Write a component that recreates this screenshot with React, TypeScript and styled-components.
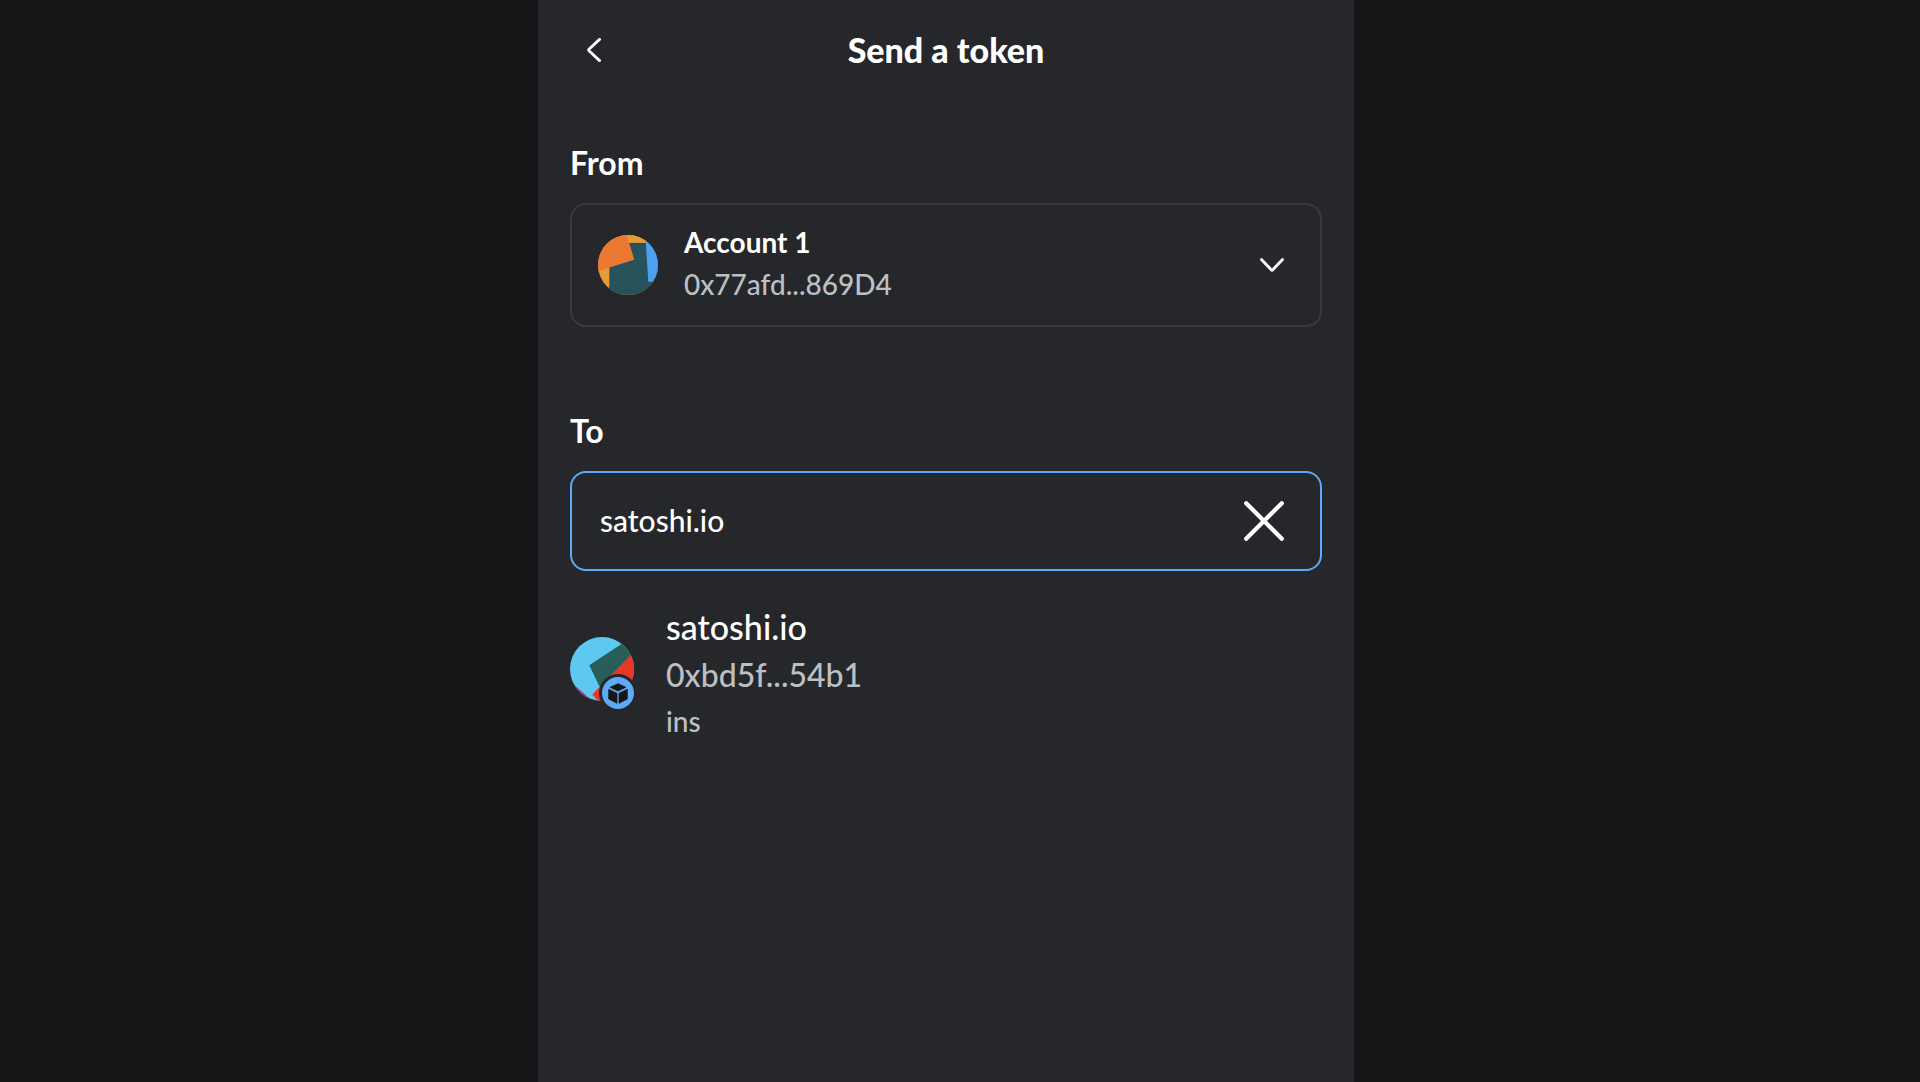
import React, { useState } from "react";
import styled, { createGlobalStyle } from "styled-components";

const colors = {
  backdrop: "#141618",
  surface: "#26272b",
  border: "#393b3f",
  primary: "#5fa9f7",
  text: "#ffffff",
  muted: "#bbc0c5",
};

const GlobalStyle = createGlobalStyle`
  *, *::before, *::after { box-sizing: border-box; }
  body {
    margin: 0;
    background: ${colors.backdrop};
    color: ${colors.text};
    font-family: "Lato Medium", Lato, "Liberation Sans", sans-serif;
  }
  button, input { font: inherit; color: inherit; }
`;

const Page = styled.div`
  display: flex;
  justify-content: center;
  min-height: 100vh;
  padding-right: 28px;
`;

const Panel = styled.main`
  display: flex;
  flex-direction: column;
  width: 100%;
  max-width: 816px;
  padding: 0 32px 32px;
  background: ${colors.surface};
`;

const Header = styled.header`
  display: grid;
  grid-template-columns: 48px 1fr 48px;
  align-items: center;
  height: 99px;
`;

const Title = styled.h1`
  margin: 0;
  font-family: "Lato Black", Lato, "Liberation Sans", sans-serif;
  font-size: 34px;
  line-height: 48px;
  font-weight: 900;
  text-align: center;
`;

const IconButton = styled.button<{ $size: number }>`
  display: flex;
  align-items: center;
  justify-content: center;
  flex: none;
  width: ${(p) => p.$size}px;
  height: ${(p) => p.$size}px;
  padding: 0;
  border: 0;
  background: none;
  cursor: pointer;
`;

const Section = styled.section`
  display: flex;
  flex-direction: column;
  gap: 16px;
  padding-top: 40px;
  margin-bottom: 40px;
`;

const labelText = `
  margin: 0;
  font-family: Lato, "Liberation Sans", sans-serif;
  font-size: 32px;
  line-height: 48px;
  font-weight: 700;
`;

const SectionTitle = styled.h2`
  ${labelText}
`;

const SectionLabel = styled.label`
  ${labelText}
`;

const AccountButton = styled.button`
  display: flex;
  align-items: center;
  gap: 26px;
  height: 124px;
  padding: 0 36px 0 26px;
  border: 2px solid ${colors.border};
  border-radius: 16px;
  background: none;
  text-align: left;
  cursor: pointer;
`;

const Lines = styled.span<{ $lift?: number }>`
  display: flex;
  flex: 1;
  flex-direction: column;
  min-width: 0;
  padding-bottom: ${(p) => p.$lift ?? 0}px;
`;

const Line = styled.span<{ $size: number; $height: number; $muted?: boolean; $bold?: boolean }>`
  font-family: ${(p) => (p.$bold ? 'Lato, "Liberation Sans", sans-serif' : "inherit")};
  font-size: ${(p) => p.$size}px;
  line-height: ${(p) => p.$height}px;
  font-weight: ${(p) => (p.$bold ? 700 : 400)};
  color: ${(p) => (p.$muted ? colors.muted : colors.text)};
`;

const Field = styled.div`
  display: flex;
  align-items: center;
  height: 100px;
  padding: 0 32px 0 28px;
  border: 2px solid ${colors.primary};
  border-radius: 16px;
`;

const Input = styled.input`
  flex: 1;
  min-width: 0;
  padding: 0 0 2px;
  border: 0;
  outline: 0;
  background: none;
  font-size: 30px;
  line-height: 40px;
`;

const Result = styled.button`
  display: flex;
  align-items: center;
  gap: 32px;
  padding: 16px 0;
  border: 0;
  background: none;
  text-align: left;
  cursor: pointer;
`;

const AvatarWrap = styled.span`
  position: relative;
  display: flex;
  flex: none;
  margin-bottom: 8px;
`;

const Badge = styled.span`
  position: absolute;
  right: -3px;
  bottom: -11px;
  display: flex;
  border: 3px solid ${colors.surface};
  border-radius: 50%;
  background: ${colors.surface};
`;

const AccountAvatar = () => (
  <svg width="60" height="60" viewBox="0 0 60 60" aria-hidden="true">
    <clipPath id="account-circle"><circle cx="30" cy="30" r="30" /></clipPath>
    <g clipPath="url(#account-circle)">
      <rect width="60" height="60" fill="#e49b38" />
      <path d="M11.3 7.7H60V60H11.3z" fill="#25525b" />
      <path d="M47.3 0H60V46.7H50.3z" fill="#4ba1ee" />
      <path d="M28 0H47.7V7.7H28z" fill="#e49b38" />
      <path d="M0 0H28.8L36.3 24.7L0 36z" fill="#ec7932" />
    </g>
  </svg>
);

const RecipientAvatar = () => (
  <svg width="64" height="64" viewBox="0 0 64 64" aria-hidden="true">
    <clipPath id="recipient-circle"><circle cx="32" cy="32" r="32" /></clipPath>
    <g clipPath="url(#recipient-circle)">
      <rect width="64" height="64" fill="#5dc8f0" />
      <path d="M62 16L22.3 57.5L30 66H64V16z" fill="#e53826" />
      <path d="M19.3 28.3L52.3 6.5L64 14.5L43 36.3L29.6 49.8z" fill="#295d58" />
      <path d="M2 46L20 62V64H0z" fill="#c01c7c" />
    </g>
  </svg>
);

const CubeBadge = () => (
  <svg width="32" height="32" viewBox="0 0 96 96" aria-hidden="true">
    <circle cx="48" cy="48" r="48" fill="#5fa9f7" />
    <g fill="#141618" stroke="#141618" strokeWidth="2" strokeLinejoin="round">
      <path d="M48 20L72 31L48 42L24 31z" />
      <path d="M20 37L45 49V79L20 66z" />
      <path d="M76 37L51 49V79L76 66z" />
    </g>
  </svg>
);

const Stroke = styled.svg`
  fill: none;
  stroke: ${colors.text};
  stroke-linecap: round;
  stroke-linejoin: round;
  flex: none;
`;

export default function App() {
  const [recipient, setRecipient] = useState("satoshi.io");

  return (
    <>
      <GlobalStyle />
      <Page>
        <Panel>
          <Header>
            <IconButton $size={48} type="button" aria-label="Back">
              <Stroke width="14" height="24" viewBox="0 0 14 24" strokeWidth="2.8">
                <path d="M12.6 1.4L2.2 11Q1.2 12 2.2 13L12.6 22.6" />
              </Stroke>
            </IconButton>
            <Title>Send a token</Title>
          </Header>

          <Section>
            <SectionTitle>From</SectionTitle>
            <AccountButton type="button">
              <AccountAvatar />
              <Lines $lift={4}>
                <Line $size={28} $height={42} $bold>Account 1</Line>
                <Line $size={28} $height={42} $muted>0x77afd...869D4</Line>
              </Lines>
              <Stroke width="24" height="14" viewBox="0 0 24 14" strokeWidth="2.8">
                <path d="M1.5 1.5L11.2 11.8Q12 12.6 12.8 11.8L22.5 1.5" />
              </Stroke>
            </AccountButton>
          </Section>

          <Section>
            <SectionLabel htmlFor="recipient">To</SectionLabel>
            <Field>
              <Input
                id="recipient"
                type="text"
                spellCheck={false}
                value={recipient}
                onChange={(e) => setRecipient(e.target.value)}
              />
              <IconButton $size={48} type="button" aria-label="Clear" onClick={() => setRecipient("")}>
                <Stroke width="40" height="40" viewBox="0 0 40 40" strokeWidth="4.2">
                  <path d="M2.2 2.2L37.8 37.8M37.8 2.2L2.2 37.8" />
                </Stroke>
              </IconButton>
            </Field>
            <Result type="button">
              <AvatarWrap>
                <RecipientAvatar />
                <Badge>
                  <CubeBadge />
                </Badge>
              </AvatarWrap>
              <Lines>
                <Line $size={34} $height={48}>satoshi.io</Line>
                <Line $size={32} $height={48} $muted>0xbd5f...54b1</Line>
                <Line $size={28} $height={44} $muted>ins</Line>
              </Lines>
            </Result>
          </Section>
        </Panel>
      </Page>
    </>
  );
}
